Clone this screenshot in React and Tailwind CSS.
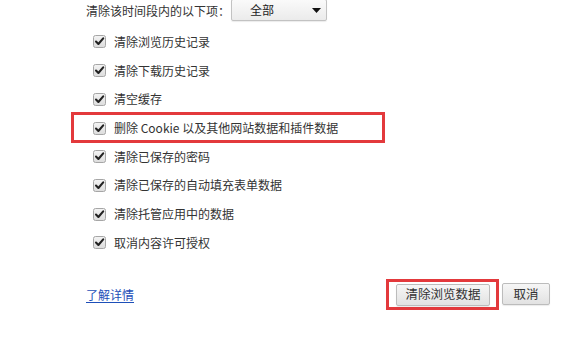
import React from 'react';

const items = [
  '清除浏览历史记录',
  '清除下载历史记录',
  '清空缓存',
  '删除 Cookie 以及其他网站数据和插件数据',
  '清除已保存的密码',
  '清除已保存的自动填充表单数据',
  '清除托管应用中的数据',
  '取消内容许可授权',
];

function CheckBox() {
  return (
    <svg width="13" height="13" viewBox="0 0 13 13" className="shrink-0">
      <defs>
        <linearGradient id="cbg" x1="0" y1="0" x2="0" y2="1">
          <stop offset="0" stopColor="#f4f4f4" />
          <stop offset="1" stopColor="#dcdcdc" />
        </linearGradient>
      </defs>
      <rect x="0.5" y="0.5" width="12" height="12" rx="2" fill="url(#cbg)" stroke="#a6a6a6" />
      <path d="M3 6.6 L5.4 9 L10.2 3.4" fill="none" stroke="#222" strokeWidth="2.1" strokeLinecap="round" strokeLinejoin="round" />
    </svg>
  );
}

export default function App() {
  return (
    <div
      className="w-[575px] h-[349px] bg-white overflow-hidden pl-[86px] text-[12px] text-[#333]"
      style={{ fontFamily: '"Microsoft YaHei", "Noto Sans CJK SC", "Liberation Sans", sans-serif' }}
    >
      {/* time range */}
      <div className="flex items-center h-[21px]">
        <span>清除该时间段内的以下项：</span>
        <div className="-mt-px ml-px w-[96px] h-[22px] flex items-center justify-between pl-[18px] pr-[5px] border border-[#c2c2c2] rounded-[2px] bg-gradient-to-b from-[#fafafa] to-[#ebebeb] shadow-[0_1px_1px_rgba(0,0,0,0.08)]">
          <span className="text-[#222]">全部</span>
          <svg width="9" height="5" viewBox="0 0 9 5">
            <path d="M0 0 H9 L4.5 5 Z" fill="#111" />
          </svg>
        </div>
      </div>

      {/* options */}
      <div className="mt-[6.65px] pl-[7px]">
        {items.map((label, i) => (
          <div key={label} className="relative flex items-center h-[28.7px] gap-[8px]">
            {i === 3 && (
              <span className="absolute left-[-22px] top-[-1.5px] w-[314px] h-[31px] border-[3px] border-[#e3393c] pointer-events-none" />
            )}
            <CheckBox />
            <span className="text-[#333]">{label}</span>
          </div>
        ))}
      </div>

      {/* footer */}
      <div className="mt-[21.65px] flex items-center justify-between pr-[25px]">
        <a className="text-[#1d4fb8] underline underline-offset-2 mt-[2px] cursor-pointer">了解详情</a>
        <div className="flex items-center">
          <div className="border-[3px] border-[#e3393c] pl-[7px] pr-[6px] pt-[2px] pb-px">
            <button className="w-[94px] h-[22px] border border-[#bcbcbc] rounded-[2px] bg-gradient-to-b from-[#f6f6f6] to-[#e2e2e2] text-[12.5px] text-[#333] shadow-[0_1px_1px_rgba(0,0,0,0.08)]">
              清除浏览数据
            </button>
          </div>
          <button className="ml-[3px] w-[48px] h-[22px] border border-[#bcbcbc] rounded-[2px] bg-gradient-to-b from-[#f6f6f6] to-[#e2e2e2] text-[12.5px] text-[#333] shadow-[0_1px_1px_rgba(0,0,0,0.08)]">
            取消
          </button>
        </div>
      </div>
    </div>
  );
}
